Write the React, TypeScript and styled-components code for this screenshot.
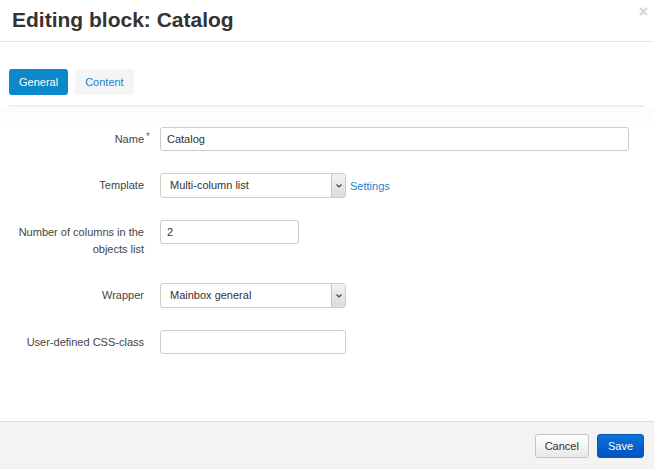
import React from "react";
import styled, { createGlobalStyle } from "styled-components";

const Global = createGlobalStyle`
  html, body { margin: 0; padding: 0; background: #fff; }
  body { font-family: "Liberation Sans", Arial, sans-serif; color: #333; }
  * { box-sizing: border-box; }
`;

const Dialog = styled.div`
  width: 654px;
  height: 469px;
  display: flex;
  flex-direction: column;
  background: #fff;
`;

const Header = styled.div`
  position: relative;
  height: 42px;
  border-bottom: 1px solid #e8e8e8;
  padding: 8px 12px 0;
`;

const Title = styled.h3`
  margin: 0;
  font-size: 21px;
  line-height: 24px;
  font-weight: bold;
  color: #333;
`;

const Close = styled.span`
  position: absolute;
  right: 6px;
  top: 2px;
  font-size: 16px;
  font-weight: bold;
  color: #d0d0d0;
  line-height: 20px;
`;

const Body = styled.div`
  flex: 1;
  display: flex;
  flex-direction: column;
`;

const Tabs = styled.div`
  display: flex;
  gap: 7px;
  margin: 27px 9px 0;
  padding-bottom: 10px;
  border-bottom: 2px solid #eeeeee;
`;

const Tab = styled.div<{ $active?: boolean }>`
  height: 26px;
  padding: 0 10px;
  display: flex;
  align-items: center;
  border-radius: 3px;
  font-size: 11px;
  background: ${(p) => (p.$active ? "#0b88c9" : "#f5f5f5")};
  color: ${(p) => (p.$active ? "#fff" : "#1a84c8")};
`;

const Form = styled.div`
  flex: 1;
  padding-top: 20px;
  display: flex;
  flex-direction: column;
  gap: 22px;
  background: linear-gradient(#fbfbfb, #ffffff 24px);
`;

const Row = styled.div`
  display: flex;
  align-items: flex-start;
  gap: 16px;
`;

const Label = styled.div`
  position: relative;
  width: 144px;
  flex: none;
  text-align: right;
  font-size: 11px;
  line-height: 17px;
  padding: 4px 0 3px;
  color: #444;
`;

const Req = styled.span`
  position: absolute;
  right: -6px;
  top: 5px;
  color: #e23b3b;
  font-size: 10px;
  line-height: 10px;
`;

const Input = styled.div<{ $w: number }>`
  width: ${(p) => p.$w}px;
  height: 24px;
  border: 1px solid #cccccc;
  border-radius: 3px;
  background: #fff;
  font-size: 11px;
  line-height: 22px;
  padding: 0 6px;
  color: #333;
`;

const Select = styled.div`
  width: 186px;
  height: 25px;
  border: 1px solid #cccccc;
  border-radius: 3px;
  background: #fff;
  display: flex;
  font-size: 11px;
  color: #333;
  overflow: hidden;
`;

const SelectText = styled.div`
  flex: 1;
  padding: 0 9px;
  line-height: 23px;
`;

const Arrow = styled.div`
  width: 14px;
  border-left: 1px solid #c4c4c4;
  background: linear-gradient(#f2f2f2, #dcdcdc);
  display: flex;
  align-items: center;
  justify-content: center;
`;

const Field = styled.div`
  display: flex;
  align-items: center;
  gap: 4px;
`;

const Link = styled.span`
  font-size: 11px;
  color: #1a84c8;
`;

const Footer = styled.div`
  height: 48px;
  border-top: 1px solid #dddddd;
  background: #f3f3f3;
  display: flex;
  justify-content: flex-end;
  align-items: flex-start;
  gap: 8px;
  padding: 12px 10px 0;
`;

const Button = styled.div<{ $primary?: boolean }>`
  height: 24px;
  padding: 0 ${(p) => (p.$primary ? 10 : 9)}px;
  border-radius: 3px;
  font-size: 11px;
  display: flex;
  align-items: center;
  border: 1px solid ${(p) => (p.$primary ? "#0a55b8" : "#c6c6c6")};
  background: ${(p) =>
    p.$primary
      ? "linear-gradient(#0b74d9, #0052c2)"
      : "linear-gradient(#ffffff, #e8e8e8)"};
  color: ${(p) => (p.$primary ? "#fff" : "#333")};
`;

const Chevron = () => (
  <svg width="8" height="6" viewBox="0 0 8 6">
    <path d="M1.5 1.5 L4 4 L6.5 1.5" fill="none" stroke="#444" strokeWidth="1.2" />
  </svg>
);

export default function App() {
  return (
    <>
      <Global />
      <Dialog>
        <Header>
          <Title>Editing block: Catalog</Title>
          <Close>×</Close>
        </Header>
        <Body>
          <Tabs>
            <Tab $active>General</Tab>
            <Tab>Content</Tab>
          </Tabs>
          <Form>
            <Row>
              <Label>
                Name<Req>*</Req>
              </Label>
              <Input $w={469}>Catalog</Input>
            </Row>
            <Row>
              <Label>Template</Label>
              <Field>
                <Select>
                  <SelectText>Multi-column list</SelectText>
                  <Arrow>
                    <Chevron />
                  </Arrow>
                </Select>
                <Link>Settings</Link>
              </Field>
            </Row>
            <Row>
              <Label>
                Number of columns in the
                <br />
                objects list
              </Label>
              <Input $w={139}>2</Input>
            </Row>
            <Row>
              <Label>Wrapper</Label>
              <Select>
                <SelectText>Mainbox general</SelectText>
                <Arrow>
                  <Chevron />
                </Arrow>
              </Select>
            </Row>
            <Row>
              <Label>User-defined CSS-class</Label>
              <Input $w={186} />
            </Row>
          </Form>
          <Footer>
            <Button>Cancel</Button>
            <Button $primary>Save</Button>
          </Footer>
        </Body>
      </Dialog>
    </>
  );
}
